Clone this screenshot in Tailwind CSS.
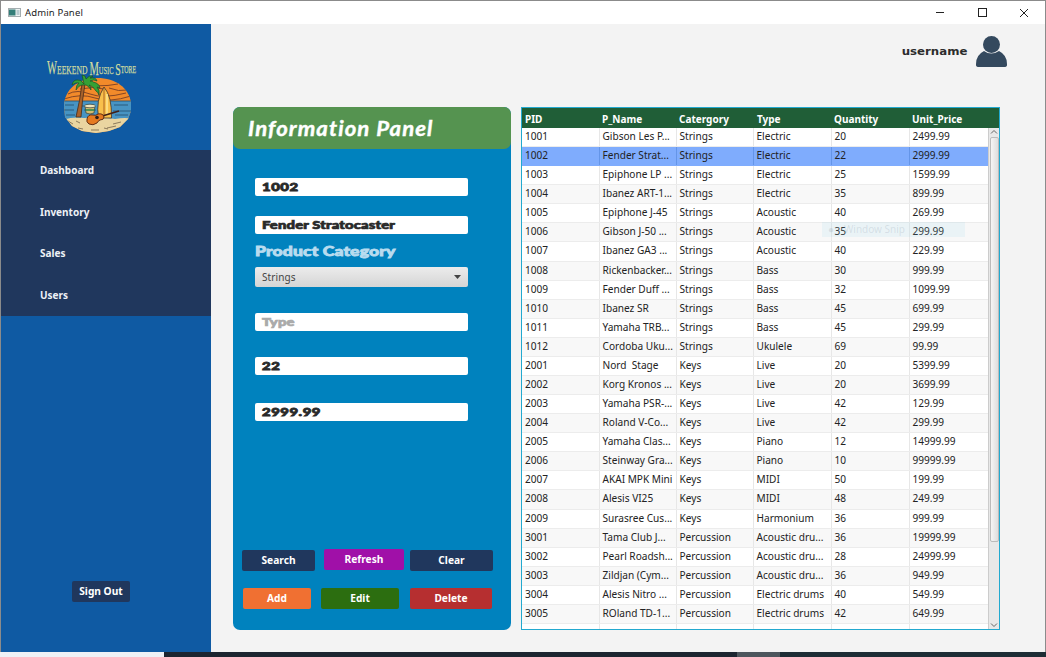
<!DOCTYPE html>
<html lang="en">
<head>
<meta charset="utf-8">
<title>Admin Panel</title>
<script src="https://cdn.jsdelivr.net/npm/@tailwindcss/browser@4"></script>
</head>
<body class="h-[657px] w-[1046px] overflow-hidden bg-[#1c2730] font-['Noto_Sans','Open_Sans',sans-serif] text-[#222]">
<div class="flex h-[652px] flex-col border-x border-t border-[#8b8b8b] bg-[#f3f3f3]">
  <header class="flex h-[23px] shrink-0 items-center bg-white pl-[7px] pr-[16px]">
    <svg class="h-[9px] w-[13px]" viewBox="0 0 13 9"><rect x=".5" y=".5" width="12" height="8" fill="#eef3f3" stroke="#a4adb0"/><rect x="1" y="1.500" width="6.500" height="6" fill="#347e79"/><rect x="8.500" y="2" width="3" height="5" fill="#b9cbd0"/></svg>
    <span class="ml-[4px] text-[9.5px] leading-none tracking-[0.15px] text-[#222]">Admin Panel</span>
    <div class="ml-auto flex items-center gap-[32px]">
      <svg class="h-[10px] w-[10px]" viewBox="0 0 10 10" stroke="#222" fill="none"><path d="M1 4.500h8"/></svg>
      <svg class="h-[10px] w-[10px]" viewBox="0 0 10 10" stroke="#222" fill="none"><rect x="1.500" y=".5" width="8" height="8"/></svg>
      <svg class="h-[10px] w-[10px]" viewBox="0 0 10 10" stroke="#222" fill="none"><path d="M1 1l8 8M9 1L1 9"/></svg>
    </div>
  </header>
  <main class="flex min-h-0 flex-1">
    <aside class="flex w-[210px] shrink-0 flex-col bg-[#0f5aa3]">
      <div class="flex h-[126px] justify-center pr-[30px] pt-[32px]">
        <svg class="h-[82px] w-[94px] overflow-visible" viewBox="44 56 94 82">
          <text x="47" y="73.500" font-family="Liberation Serif, serif" fill="#cfdca0" stroke="#cfdca0" stroke-width=".25" font-size="13" textLength="89" lengthAdjust="spacingAndGlyphs"><tspan font-size="18">W</tspan>EEKEND <tspan font-size="18" dy="1.500">M</tspan><tspan font-size="11" dy="-1.500">USIC </tspan><tspan font-size="17" dy="1.500">S</tspan><tspan font-size="10" dy="-2">TORE</tspan></text>
          <clipPath id="sun"><path d="M64 106c0-16 14-28 33-28s32 10 34 25l0 8-3 8-8 8-11 4-13 2-14-2-10-5-7-9z"/></clipPath>
          <g clip-path="url(#sun)">
            <path fill="#f28a2a" d="M60 76h75v60H60z"/>
            <path fill="none" stroke="#7b3e24" stroke-width=".9" d="M84 83q13 5 34 1M68 94q9-5 22 0t36-1M64 99q17-6 31-1t36-2M80 89q13-3 24 0M109 88q10 4 18 2"/>
            <path fill="#4794c3" d="M60 101h75v22H60z"/>
            <path fill="none" stroke="#234b6b" stroke-width=".8" d="M62 101h70M65 105h9m8 1h8m24-1h14M63 110h11m10 0h12m17 1h18M66 115h9m40 0h13"/>
            <path fill="#ead5a0" d="M60 121q12-5 24-3l17-1 14 2q11-2 18 0v18H60z"/>
            <path fill="none" stroke="#75634a" stroke-width=".8" d="M68 121l5 3m3-3l4 2m33 1l8-2m-43 6l5 1m24-1l9-2m-25 4l8 0m5-2l4 1"/>
          </g>
          <path fill="#f8c04c" stroke="#3d3028" stroke-width=".8" d="M98.500 118q-3-18 5.500-31q8 9 7.500 31z"/>
          <path stroke="#a35a1d" stroke-width=".9" d="M104 88v28"/><path stroke="#fff0a5" stroke-width="1.200" d="M107 94v20"/>
          <path fill="#a8622b" stroke="#442b1c" stroke-width=".8" d="M76 117q4-17 6-33l3 0q-3 17-4 33z"/>
          <path fill="#34a135" stroke="#174f28" stroke-width=".7" d="M84 84q-3-5-7-4-4 0-5 5 4-3 7-2-3 2-3 7 3-5 6-5 2 0 4 0 3 1 5 5 0-4-2-5 4 1 7 6 2 1 3 4 1-5-2-8l3 1q-1-5-7-6 0-1-3-1 4-2 7 0-1-4-7-3l3-2q-4-1-7 3 0-4-4-4 1 4 2 9z"/>
          <path fill="#d3bc72" stroke="#333e37" stroke-width=".7" d="M85 106h10l-1 7q-4 2-8 0z"/><ellipse cx="90" cy="106" rx="5.500" ry="1.800" fill="#efe5bd" stroke="#333e37" stroke-width=".7"/><path stroke="#278449" stroke-width="1.500" d="M85.500 110h9"/>
          <path stroke="#402018" stroke-width="1.800" d="M99 117l20-6"/>
          <path fill="#e57a20" stroke="#54220f" stroke-width=".9" d="M87 119q1-5 6-4 3 1 5-1 5-1 6 3 0 3-4 3-2 1-3 3-4 3-8 1-3-2-2-5z"/><circle cx="97" cy="117.500" r="1.800" fill="#301d18"/>
        </svg>
      </div>
      <nav class="grid h-[166px] grid-rows-4 bg-[#20375d] text-[10px] font-bold text-[#edf1f6]">
        <a class="flex items-center pl-[39px]">Dashboard</a>
        <a class="flex items-center pl-[39px]">Inventory</a>
        <a class="flex items-center pl-[39px]">Sales</a>
        <a class="flex items-center pl-[39px]">Users</a>
      </nav>
      <button class="ml-[71px] mt-[265px] h-[21px] w-[58px] rounded-[2px] bg-[#20375d] text-[10.2px] font-bold leading-none text-white">Sign Out</button>
    </aside>
    <section class="flex min-w-0 flex-1 flex-col">
      <div class="flex h-[83px] shrink-0 items-start justify-end pr-[38px] pt-[12px]">
        <span class="mr-[9px] mt-[7px] origin-right scale-x-[1.07] text-[11px] font-bold leading-[17px] text-[#2c2c2c] font-['DejaVu_Sans',sans-serif]">username</span>
        <svg class="h-[32px] w-[31px]" viewBox="0 0 31 32" fill="#34495e"><circle cx="15.500" cy="8.500" r="8.500"/><path d="M8 15q7 5 15 0q8 4 8 13v1q0 2-3 2H3q-3 0-3-2v-1Q0 19 8 15z"/></svg>
      </div>
      <div class="flex gap-[10px] pl-[22px]">
        <form class="flex h-[523px] w-[278px] shrink-0 flex-col rounded-[7px] bg-[#0082be]">
          <h1 class="flex h-[42px] shrink-0 items-center rounded-[7px] bg-[#559350] pl-[15px] font-['Lato',sans-serif] text-[20.5px] font-bold italic text-white"><span class="origin-left scale-x-[1.08] tracking-[1px] [-webkit-text-stroke:0.4px]">Information Panel</span></h1>
          <div class="ml-[22px] flex w-[213px] flex-col font-['Lato',sans-serif] text-[11px] font-black tracking-[0.1px]">
            <div class="mt-[29px] flex h-[18px] items-center rounded-[2px] bg-white pl-[7px] text-[#292929]"><span class="origin-left scale-x-[1.35] tracking-[0.4px] [-webkit-text-stroke:0.8px]">1002</span></div>
            <div class="mt-[20px] flex h-[18px] items-center rounded-[2px] bg-white pl-[7px] text-[#292929]"><span class="origin-left scale-x-[1.35] [-webkit-text-stroke:0.7px]">Fender Stratocaster</span></div>
            <label class="mt-[8px] flex h-[20px] items-center text-[13px] text-[#b9dcef]"><span class="origin-left scale-x-[1.35] [-webkit-text-stroke:0.8px]">Product Category</span></label>
            <div class="mt-[5px] flex h-[20px] items-center justify-between rounded-[2px] bg-linear-to-b from-[#ececec] to-[#d5d5d5] pl-[7px] pr-[7px] font-['Noto_Sans',sans-serif] text-[10px] font-normal text-[#444]"><span>Strings</span><svg class="h-[4px] w-[7px]" viewBox="0 0 7 4"><path fill="#444" d="M0 0h7L3.500 4z"/></svg></div>
            <div class="mt-[26px] flex h-[18px] items-center rounded-[2px] bg-white pl-[7px] text-[#aaa]"><span class="origin-left scale-x-[1.35] [-webkit-text-stroke:0.7px]">Type</span></div>
            <div class="mt-[26px] flex h-[18px] items-center rounded-[2px] bg-white pl-[7px] text-[#292929]"><span class="origin-left scale-x-[1.35] tracking-[0.4px] [-webkit-text-stroke:0.8px]">22</span></div>
            <div class="mt-[28px] flex h-[18px] items-center rounded-[2px] bg-white pl-[7px] text-[#292929]"><span class="origin-left scale-x-[1.35] tracking-[0.4px] [-webkit-text-stroke:0.8px]">2999.99</span></div>
          </div>
          <div class="mt-[128px] flex items-start pl-[9px] text-[10.2px] font-bold text-white">
            <button type="button" class="mt-px h-[21px] w-[73px] rounded-[2px] bg-[#20375d] leading-none">Search</button>
            <button type="button" class="ml-[9px] h-[21px] w-[80px] rounded-[2px] bg-[#a010a8] leading-none">Refresh</button>
            <button type="button" class="ml-[6px] mt-px h-[21px] w-[83px] rounded-[2px] bg-[#20375d] leading-none">Clear</button>
          </div>
          <div class="mt-[17px] flex items-start pl-[10px] text-[10.2px] font-bold text-white">
            <button type="button" class="h-[21px] w-[68px] rounded-[2px] bg-[#f07032] leading-none">Add</button>
            <button type="button" class="ml-[10px] h-[21px] w-[78px] rounded-[2px] bg-[#2c6e10] leading-none">Edit</button>
            <button type="button" class="ml-[11px] h-[21px] w-[82px] rounded-[2px] bg-[#b62f30] leading-none">Delete</button>
          </div>
        </form>
        <div class="relative flex h-[523px] w-[479px] flex-col overflow-hidden bg-[#22a9cf] p-px">
          <div class="grid h-[20px] shrink-0 grid-cols-[77px_77px_78px_77px_78px_90px] items-center bg-[#205e37] pt-px text-[10px] font-bold leading-none text-white">
            <span class="pl-[3px]">PID</span><span class="pl-[3px]">P_Name</span><span class="pl-[3px]">Catergory</span><span class="pl-[3px]">Type</span><span class="pl-[3px]">Quantity</span><span class="pl-[3px]">Unit_Price</span>
          </div>
          <div class="flex min-h-0 flex-1 bg-white">
            <div id="rows" class="w-[466px] overflow-hidden text-[10.1px]"></div>
            <div class="flex w-[11px] flex-col items-center border-l border-[#ccc] bg-[#e8e8e8]">
              <svg class="h-[9px] w-[8px] shrink-0" viewBox="0 0 8 9" fill="none" stroke="#666"><path d="M1 5.500l3-3 3 3"/></svg>
              <div class="h-[405px] w-[9px] rounded-[2px] border border-[#bbb] bg-linear-to-r from-[#f5f5f5] to-[#dedede]"></div>
              <svg class="mt-auto h-[8px] w-[8px] shrink-0" viewBox="0 0 8 8" fill="none" stroke="#666"><path d="M1 2.500l3 3 3-3"/></svg>
            </div>
          </div>
          <div class="absolute left-[301px] top-[115px] flex h-[15px] w-[143px] items-center bg-[#9dd5ea]/15 pl-[6px] text-[10px] text-[#789]/20"><span class="mr-[10px]">●</span>Window Snip</div>
        </div>
      </div>
    </section>
  </main>
</div>
<div class="flex h-[5px]"><div class="w-[164px] bg-[#eef1f6]"></div><div class="w-[573px] bg-[#1c2530]"></div><div class="w-[43px] bg-[#4d565d]"></div><div class="flex-1 bg-[#1d2d35]"></div></div>
<script>
const rows = `1001|Gibson Les P...|Strings|Electric|20|2499.99
1002|Fender Strat...|Strings|Electric|22|2999.99
1003|Epiphone LP ...|Strings|Electric|25|1599.99
1004|Ibanez ART-1...|Strings|Electric|35|899.99
1005|Epiphone J-45|Strings|Acoustic|40|269.99
1006|Gibson J-50 ...|Strings|Acoustic|35|299.99
1007|Ibanez GA3 ...|Strings|Acoustic|40|229.99
1008|Rickenbacker...|Strings|Bass|30|999.99
1009|Fender Duff ...|Strings|Bass|32|1099.99
1010|Ibanez SR|Strings|Bass|45|699.99
1011|Yamaha TRB...|Strings|Bass|45|299.99
1012|Cordoba Uku...|Strings|Ukulele|69|99.99
2001|Nord  Stage|Keys|Live|20|5399.99
2002|Korg Kronos ...|Keys|Live|20|3699.99
2003|Yamaha PSR-...|Keys|Live|42|129.99
2004|Roland V-Co...|Keys|Live|42|299.99
2005|Yamaha Clas...|Keys|Piano|12|14999.99
2006|Steinway Gra...|Keys|Piano|10|99999.99
2007|AKAI MPK Mini|Keys|MIDI|50|199.99
2008|Alesis VI25|Keys|MIDI|48|249.99
2009|Surasree Cus...|Keys|Harmonium|36|999.99
3001|Tama Club J...|Percussion|Acoustic dru...|36|19999.99
3002|Pearl Roadsh...|Percussion|Acoustic dru...|28|24999.99
3003|Zildjan (Cym...|Percussion|Acoustic dru...|36|949.99
3004|Alesis Nitro ...|Percussion|Electric drums|40|549.99
3005|ROland TD-1...|Percussion|Electric drums|42|649.99
|||||`.split("\n");
document.getElementById("rows").innerHTML = rows.map((line, i) => {
  const tone = i === 1 ? "bg-[#7facfd] divide-[#6495e8] border-[#7facfd]" : i % 2 ? "bg-[#f8f8f8] divide-[#e7e7e7] border-[#ececec]" : "bg-white divide-[#e7e7e7] border-[#ececec]";
  return `<div class="grid h-[19.08px] grid-cols-[78px_77px_77px_78px_78px_78px] divide-x border-b leading-[17px] whitespace-pre ${tone}">` +
    line.split("|").map((t, c) => `<span class="${c === 0 ? "pl-[3px]" : "pl-[2.5px]"}">${t}</span>`).join("") + `</div>`;
}).join("");
</script>
</body>
</html>
